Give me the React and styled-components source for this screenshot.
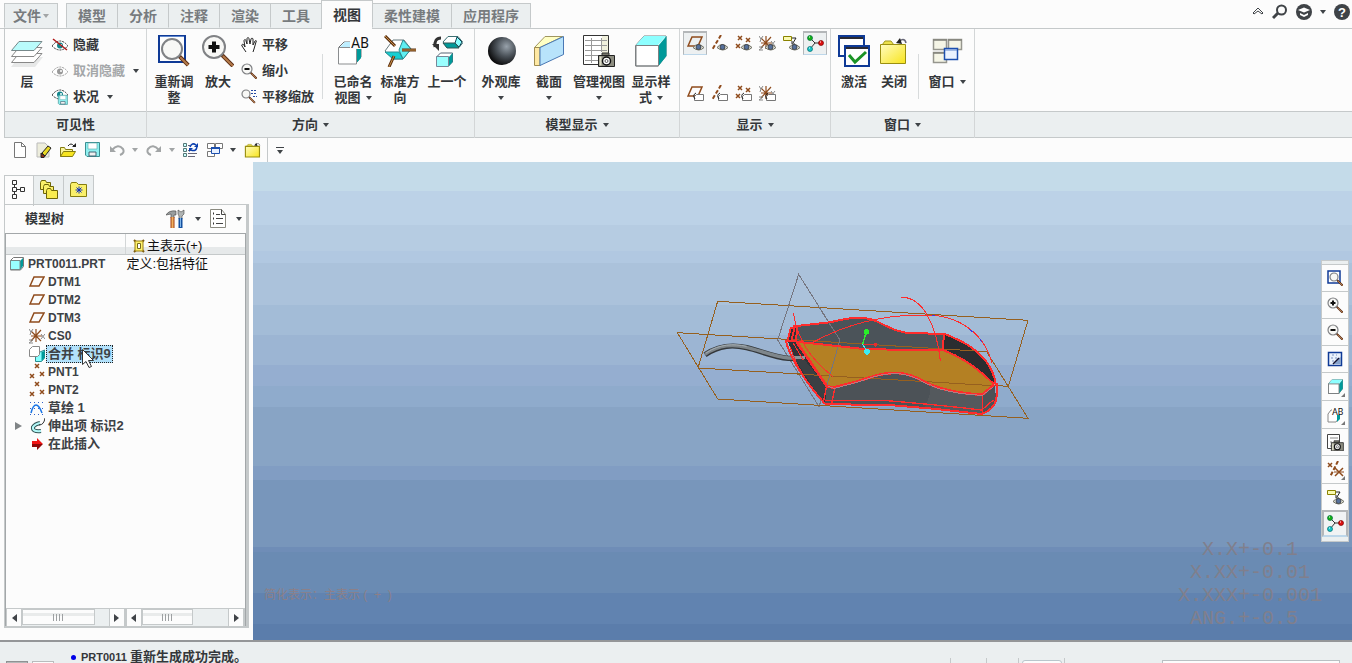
import { useState } from "react";
import styled, { createGlobalStyle } from "styled-components";

const BROWN = "#8f4b1c";
const INK = "#3f4347";

/* ---------- icons ---------- */

const Svg = ({ w = 16, h = w, children, ...rest }) => (
  <svg width={w} height={h} viewBox={`0 0 ${w} ${h}`} fill="none" aria-hidden="true" {...rest}>
    {children}
  </svg>
);

const Lens = ({ cx, cy, r, len, sign, handle = 2 }) => {
  const k = r * 0.72;
  const thin = r < 8;
  return (
    <g>
      <path d={`M${cx + k} ${cy + k}l${len} ${len}`} stroke="#5a2c14" strokeWidth={handle + (thin ? 0 : 1)} />
      <path d={`M${cx + k + 1} ${cy + k + 1}l${len - 1} ${len - 1}`} stroke="#b47a4a" strokeWidth={handle - 1} />
      <circle cx={cx} cy={cy} r={r} fill="#f8f8f6" stroke="#808285" strokeWidth={thin ? 1.2 : 2} />
      {sign && <path d={`M${cx - r * 0.5} ${cy}h${r}`} stroke="#111" strokeWidth={thin ? 2 : 4} />}
      {sign === "+" && <path d={`M${cx} ${cy - r * 0.5}v${r}`} stroke="#111" strokeWidth={thin ? 2 : 4} />}
    </g>
  );
};

const LayersIcon = () => (
  <Svg w={32}>
    <path d="M8 22h24l-8 10H0z" fill="#d9dadb" opacity=".6" />
    <path d="M8 18.500h23l-8 9H.5z" fill="#fff" stroke="#888" />
    <path d="M8 12.500h23l-8 9H.5z" fill="#fff" stroke="#888" />
    <path d="M8 6.500h23l-8 9H.5z" fill="#b9fbfb" stroke="#77898b" />
  </Svg>
);
const RefitIcon = () => (
  <Svg w={32}>
    <path d="M1 1h26v26H1z" fill="#fdfdfd" stroke="#0f3a96" strokeWidth="2" />
    <path d="M2 1.500h24" stroke="#5f86cc" />
    <Lens cx={14} cy={14} r={10} len={9} handle={3} />
  </Svg>
);
const ZoomInIcon = () => (
  <Svg w={32}>
    <Lens cx={12} cy={12} r={11} len={11} handle={3} sign="+" />
  </Svg>
);
const NamedViewIcon = () => (
  <Svg w={34} h={32}>
    <path d="M3 12l5-5h17v15l-5 6H3z" fill="#fff" stroke="#6d7072" />
    <path d="M4 12l5-5h10l-5 5z" fill="#bdeeff" />
    <path d="M20.500 13l4.500-4v14l-4.500 5z" fill="#009a9a" />
    <path d="M2.500 12.500h18V29h-18z" fill="#fff" stroke="#8a8d8f" />
    <path d="M14 2h20v12H14z" fill="#fcfcfc" />
    <text x="15" y="13" fontSize="14" fontWeight="400" fill="#111" fontFamily="Roboto, sans-serif">AB</text>
  </Svg>
);
const StdIcon = () => (
  <Svg w={32}>
    <path d="M9 5h11l7 9-8 10H9L1 16z" fill="#fff" stroke="#66797c" />
    <path d="M19 5l8 9-8 10-4-9z" fill="#5eeff2" stroke="#2a8c90" />
    <path d="M1 17h14l4 7H9z" fill="#16cfd2" stroke="#2a8c90" />
    <path d="M1 1l10 10M18 15h14M10 21L5 32" stroke="#5c3010" strokeWidth="3" />
    <path d="M1 1l10 10M18 15h14M10 21L5 32" stroke="#c89048" />
  </Svg>
);
const PreviousIcon = () => (
  <Svg w={32}>
    <path d="M12 7l5-5.500h10l5 6-4 5H16z" fill="#fff" stroke="#3c6f72" />
    <path d="M26 2l5 5-3 5-4-4z" fill="#8ff" stroke="#145" />
    <path d="M12 8h12l4 5H16z" fill="#009a9a" stroke="#355" />
    <path d="M5.500 22l4-4h12v9l-4 4" fill="#fff" stroke="#567" />
    <path d="M18 22l3.500-4v9L18 31z" fill="#009a9a" />
    <path d="M5.500 21.500h12v10h-12z" fill="#9ff" stroke="#789" />
    <path d="M10 3Q3 3 4 12" stroke="#333" strokeWidth="3" />
    <path d="M1 9h7v7z" fill="#333" />
  </Svg>
);
const SphereIcon = () => (
  <Svg w={32}>
    <defs>
      <radialGradient id="ball" cx=".66" cy=".34" r=".7">
        <stop offset="0" stopColor="#98a2ab" />
        <stop offset=".5" stopColor="#4b5259" />
        <stop offset="1" stopColor="#0b0b0c" />
      </radialGradient>
    </defs>
    <circle cx="17" cy="16" r="14" fill="url(#ball)" />
  </Svg>
);
const SectionIcon = () => (
  <Svg w={32}>
    <path d="M1.500 12.500L12 1.500h18L7 12.500z" fill="#ffffc4" stroke="#a09660" />
    <path d="M1.500 12.500H7v18H1.500z" fill="#ffe9a4" stroke="#a08c50" />
    <path d="M7 12.500L30.500 1.500v18L7 30.500z" fill="#b8e3fb" stroke="#4a78b4" />
  </Svg>
);
const CameraIcon = ({ x, y, s = 1 }) => (
  <g transform={`translate(${x} ${y}) scale(${s})`}>
    <path d="M4 1h7v3H4z" fill="#77776b" stroke="#333" />
    <path d="M.5 3.500h16v11H.5z" fill="#8d8d80" stroke="#222" />
    <path d="M1.500 4.500h2v9h-2z" fill="#ddddc8" />
    <circle cx="8.500" cy="9" r="4" fill="#fff" stroke="#111" strokeWidth="1.500" />
    <circle cx="8.500" cy="9" r="1.500" stroke="#555" />
  </g>
);
const ManageIcon = () => (
  <Svg w={32}>
    <path d="M.5.5h25v29H.5z" fill="#fff" stroke="#333" />
    <path d="M19 1h6v20h-6z" fill="#f0f0dc" />
    <path d="M2 5.500h22M2 10.500h22M2 15.500h22M2 20.500h14M2 25.500h14M8.500 3v25M18.500 3v14" stroke="#999" />
    <CameraIcon x={15} y={17} />
  </Svg>
);
const CubeIcon = ({ size = 32 }) => {
  const small = size < 20;
  return (
    <svg width={size} height={size} viewBox="0 0 32 32" fill="none" aria-hidden="true" strokeWidth={small ? 2 : 1}>
      <path d="M.5 10.500L9 1h22v20l-8 10H.5z" fill="#fff" stroke="#7c8082" />
      <path d="M1 10L9 1h22l-8 9z" fill="#8dffff" />
      <path d="M23.500 10.500L31.500 1v20l-8 10z" fill="#009a9a" />
      <path d="M1 10.500h22.500V31H1z" stroke="#7c8082" />
    </svg>
  );
};
const ActivateIcon = () => (
  <Svg w={32}>
    <path d="M1 1h25v20H1z" fill="#fff" stroke="#0f3a96" strokeWidth="2" />
    <path d="M2 2h23v2H2z" fill="#2a2a33" />
    <path d="M7 11h24v20H7z" fill="#fff" stroke="#0f3a96" strokeWidth="2" />
    <path d="M8 12h22v2H8z" fill="#2a2a33" />
    <path d="M11 20l6 7 11-10" stroke="#1b9426" strokeWidth="3" />
  </Svg>
);
const CloseFolder = ({ size = 32 }) => (
  <svg width={size} height={size} viewBox="0 0 32 32" fill="none" aria-hidden="true">
    <defs>
      <linearGradient id="folder" x1="0" y1="0" x2="1" y2="1">
        <stop offset="0" stopColor="#fffcc0" />
        <stop offset="1" stopColor="#f8e41c" />
      </linearGradient>
    </defs>
    <path d="M4 10l3-4h6l3 4z" fill="#ece14a" stroke="#a09820" />
    <path d="M2.500 9.500h25v19h-25z" fill="url(#folder)" stroke="#9a8f10" strokeWidth={size < 20 ? 2 : 1} />
    <path d="M28 8c-1-5-5-4-7-1" stroke="#667" strokeWidth="1.500" />
    <path d="M18 8l4-5 2 6z" fill="#222" />
  </svg>
);
const WindowsIcon = () => (
  <Svg w={32}>
    <path d="M2.500 4.500h13v10h-13zM17.500 4.500h13v10h-13zM2.500 17.500h13v10h-13z" fill="#f5f5e6" stroke="#96968e" strokeWidth="1.500" />
    <path d="M2 5h14M17 5h14M2 18h14" stroke="#84847c" strokeWidth="1.500" />
    <path d="M13.500 13.500h13v11h-13z" fill="#eaf2ff" stroke="#1c4fae" strokeWidth="1.500" />
    <path d="M14 15h12" stroke="#5c84cc" />
  </Svg>
);

const Eye = ({ x = 0, y = 0, color = "#333", pupil = "#12868c" }) => (
  <g transform={`translate(${x} ${y})`}>
    <path d="M0 5Q4 0 8 0t8 5Q12 9 8 9T0 5z" fill="#fff" stroke={color} strokeDasharray="2 1" />
    <circle cx="8" cy="4.500" r="3" fill={pupil} />
    <circle cx="9" cy="4" r="1" fill="#fff" />
  </g>
);
const HideIcon = () => (
  <Svg>
    <Eye y={4} />
    <path d="M1 2l14 11" stroke="#b01818" strokeWidth="1.500" />
  </Svg>
);
const UnhideIcon = () => (
  <Svg>
    <Eye y={4} color="#999" pupil="#999" />
  </Svg>
);
const Disk = ({ x = 0, y = 0, s = 1 }) => (
  <g transform={`translate(${x} ${y}) scale(${s})`}>
    <path d="M.5.5h14v14H2l-1.500-1.500z" fill="#8ff0f0" stroke="#3c8f92" />
    <path d="M3 1h9v6H3z" fill="#fff" stroke="#5aa" strokeWidth=".6" />
    <path d="M4 10h7v4H4z" fill="#f0f0f0" stroke="#467" />
  </g>
);
const StatusIcon = () => (
  <Svg>
    <Eye y={1} />
    <Disk x={6} y={6} s={0.65} />
  </Svg>
);
const HandIcon = () => (
  <Svg>
    <path
      d="M5 15l-4-6c-1-2 1-2 2-1l1 2-1-6c0-2 2-2 2 0l1 3V2c0-2 2-2 2 0l1 5 1-5c0-1 2-1 2 0v6l2-4c1-1 2 0 1 1l-2 7-1 3"
      fill="#fff" stroke="#222" />
  </Svg>
);
const ZoomOutIcon = () => (
  <Svg>
    <Lens cx={6} cy={6} r={5} len={6} sign="-" />
  </Svg>
);
const SmallZoomIn = () => (
  <Svg>
    <Lens cx={6} cy={6} r={5} len={6} sign="+" />
  </Svg>
);
const PanZoomIcon = () => (
  <Svg>
    <Lens cx={5} cy={5} r={4} len={6} />
    <path d="M10 1.500h6M10 4.500h6M12 7.500h4" stroke="#2448a0" strokeDasharray="2 1" />
  </Svg>
);
const SmallRefit = () => (
  <Svg>
    <path d="M1 1h12v12H1z" fill="#fff" stroke="#0f3a96" strokeWidth="1.500" />
    <Lens cx={7} cy={7} r={4} len={6} />
  </Svg>
);

const Cross = ({ x, y, r = 2, color = BROWN }) => (
  <path d={`M${x - r} ${y - r}l${2 * r} ${2 * r}M${x + r} ${y - r}l${-2 * r} ${2 * r}`} stroke={color} strokeWidth="1.500" />
);
const datumShapes = {
  plane: <path d="M5 2h10l-4 9H1z" stroke={BROWN} strokeWidth="1.500" />,
  axis: <path d="M10 0L1 15" stroke={BROWN} strokeWidth="2" strokeDasharray="4 2" />,
  points: (
    <>
      <Cross x={5} y={3} />
      <Cross x={13} y={5} />
      <Cross x={3} y={11} />
    </>
  ),
  csys: (
    <>
      <path d="M7 1v13M2 8h11M2 3l10 10M12 2L2 13" stroke={BROWN} strokeWidth="1.200" />
      <path d="M0 1l2 3 2-3M2 4l-1 3M12 6l4 5M16 6l-4 5M0 12h4l-4 3h4" stroke="#888" />
    </>
  ),
  note: (
    <>
      <path d="M.5 1.500h8v4h-8z" fill="#fafab0" stroke="#8a8200" />
      <path d="M9 3h4l-3 5M12 9H9V6" stroke="#222" />
    </>
  ),
};
const DatumIcon = ({ kind, mark }) => (
  <Svg w={17}>
    {datumShapes[kind]}
    {mark === "eye" && (
      <>
        <path d="M6 12.500q5-6 11 0-5 5-11 0z" fill="#dedfd4" stroke="#6d6d62" />
        <circle cx="11.500" cy="12" r="2.500" fill="#56709a" stroke="#333" strokeWidth=".7" />
      </>
    )}
    {mark === "tag" && (
      <>
        <path d="M9.500 9.500h7v6h-9v-4z" fill="#fff" stroke="#777" />
        <path d="M8 14q-3-4 1-6" stroke="#222" />
      </>
    )}
  </Svg>
);
const SpinIcon = () => (
  <Svg w={17}>
    <path d="M3 3l5 5h6M8 8l-5 6" stroke="#333" />
    <circle cx="3" cy="3" r="2.500" fill="#14b414" stroke="#064" strokeWidth=".7" />
    <circle cx="14" cy="8" r="2.500" fill="#e01010" stroke="#700" strokeWidth=".7" />
    <circle cx="3" cy="14" r="2.500" fill="#16c8cc" stroke="#066" strokeWidth=".7" />
    <path d="M2 2h1M13 7h1M2 13h1" stroke="#fff" />
  </Svg>
);
const PlaneIcon = () => (
  <Svg>
    <path d="M5 3h10l-5 9H1z" stroke={BROWN} strokeWidth="1.500" />
  </Svg>
);

const NewIcon = () => (
  <Svg>
    <path d="M2.500.5h7l4 4v11h-11z" fill="#fff" stroke="#777" />
    <path d="M9.500.5v4h4" stroke="#777" />
  </Svg>
);
const EditIcon = () => (
  <Svg>
    <path d="M1 1h8l4 4v10H1z" fill="#ededdc" stroke="#bbb" />
    <path d="M6 11l6-7 3 2-6 8z" fill="#e8d824" stroke="#222" />
    <path d="M5 11l4 3-1 1.500H5z" fill="#8c3018" stroke="#222" />
  </Svg>
);
const OpenIcon = () => (
  <Svg w={17} h={16}>
    <path d="M.5 14.500v-9h4l1 2h7v3" fill="#fbf59a" stroke="#857c10" />
    <path d="M.5 14.500l3-5h12l-3 5z" fill="#f7e420" stroke="#857c10" />
    <path d="M8 4q3-4 6 0" stroke="#222" />
    <path d="M12 5h4V1z" fill="#222" />
  </Svg>
);
const SaveIcon = () => (
  <Svg>
    <Disk />
  </Svg>
);
const UndoIcon = ({ flip }) => (
  <Svg>
    <g transform={flip ? "translate(16 0) scale(-1 1)" : undefined}>
      <path d="M3 8q6-7 11-1 2 4-3 6" stroke="#a2a5a6" strokeWidth="2" />
      <path d="M1 4v6h6z" fill="#a2a5a6" />
    </g>
  </Svg>
);
const RegenIcon = () => (
  <Svg>
    <path d="M.5 1.500h3v3h-3zM.5 6.500h3v3h-3zM.5 11.500h3v3h-3z" fill="#cff" stroke="#577" />
    <path d="M5 3.500h2M5 8.500h3M5 11.500h9M5 14.500h7" stroke="#667" />
    <path d="M7 5q2-5 6-2M14 5q-1 5-6 3" stroke="#0b3fae" strokeWidth="1.500" />
    <path d="M15 1v4h-4zM6 10V6h4z" fill="#0b3fae" />
  </Svg>
);
const SmallWindows = () => (
  <Svg>
    <path d="M.5 1.500h7v5h-7zM8.500 1.500h7v5h-7zM.5 9.500h7v5h-7z" fill="#fff" stroke="#777" />
    <path d="M4.500 5.500h8v6h-8z" fill="#e8f1ff" stroke="#1c4fae" />
    <path d="M4 6h9" stroke="#1c4fae" strokeWidth="2" />
  </Svg>
);
const TreeIcon = () => (
  <Svg w={14} h={20}>
    <path d="M.5.5h4v4h-4zM.5 7.500h4v4h-4zM.5 14.500h4v4h-4zM8.500 7.500h4v4h-4z" stroke="#333" />
    <path d="M2.500 5v2M2.500 12v2M5 9.500h3" stroke="#333" />
  </Svg>
);
const FoldersIcon = () => (
  <Svg w={18} h={20}>
    <path d="M.5 9.500v-7l1-2h4l1 2h4v7z" fill="#faf06a" stroke="#6e6608" />
    <path d="M3.500 13.500v-7l1-2h4l1 2h4v7z" fill="#faf06a" stroke="#6e6608" />
    <path d="M6.500 18.500v-8l1-2h3l1 2h6v8z" fill="#f9ec50" stroke="#6e6608" />
  </Svg>
);
const FavIcon = () => (
  <Svg w={18}>
    <path d="M.5 15.500v-12l1-2h5l2 2h8v12z" fill="#faf06a" stroke="#857c10" />
    <path d="M9 5.500v7M5.500 9h7M6.500 6.500l5 5M11.500 6.500l-5 5" stroke="#1030c0" />
  </Svg>
);
const ToolsIcon = () => (
  <Svg w={20}>
    <path d="M0 6q3-5 10-4v4H8v3H5V5z" fill="#9a9e9f" stroke="#444" strokeWidth=".6" />
    <path d="M6.500 8v11" stroke="#a03c10" strokeWidth="4" />
    <path d="M6.500 8v11" stroke="#f0b060" strokeWidth="2" />
    <path d="M12 5V1l3 2 3-2v4l-2 2v3h-3V7z" fill="#b0b4b4" stroke="#444" strokeWidth=".6" />
    <path d="M14.500 9v10" stroke="#1450a0" strokeWidth="4" />
    <path d="M14.500 9v9" stroke="#7fb4e8" />
  </Svg>
);
const ListIcon = () => (
  <Svg w={17} h={20}>
    <path d="M.5.5h11l4 5v13H.5z" fill="#fff" stroke="#8a8a80" />
    <path d="M11.500.5v5h4" stroke="#444" />
    <path d="M6 5.500h4M6 9.500h7M6 14.500h7" stroke="#444" />
    <path d="M3 4.500h1M3 9.500h1M3 14.500h1" stroke="#333" strokeWidth="2" />
  </Svg>
);
const RepIcon = () => (
  <Svg w={12} h={14}>
    <path d="M1 1l2 2M11 1L9 3M1 13l2-2M11 13l-2-2" stroke="#7a5a14" strokeWidth="2" />
    <path d="M2 2h8v10H2z" fill="#fff36c" stroke="#9a7c10" />
    <path d="M4.500 4.500h3v5h-3z" fill="#fff" stroke="#776a20" />
  </Svg>
);
const SmallPart = () => (
  <Svg w={14}>
    <path d="M.5 3.500l3-3h10v9l-3 3.500H.5z" fill="#fff" stroke="#777" />
    <path d="M10 4l3-3v8l-3 4z" fill="#009a9a" />
    <path d="M.5 3.500h9.500v9H.5z" fill="#9ff" stroke="#788" />
  </Svg>
);
const MergeIcon = () => (
  <Svg>
    <path d="M6.500 8l9-4v8l-3 3.500h-6z" fill="#8ff" stroke="#2c8c8f" />
    <path d="M12.500 6l3-1v7l-3 3z" fill="#009a9a" />
    <path d="M.5 3.500l3-3h7v8l-2 2h-8z" fill="#fff" stroke="#888" />
  </Svg>
);
const PntIcon = () => (
  <Svg h={18}>
    <Cross x={8} y={3} />
    <Cross x={3} y={13} />
    <Cross x={13} y={11} />
  </Svg>
);
const SketchIcon = () => (
  <Svg>
    <path d="M1 2.500h14M1 8.500h14M1 14.500h14" stroke="#3262c8" strokeDasharray="1 3" />
    <path d="M2 13Q4 5 7 5q3 0 6 8" stroke="#1673e6" strokeWidth="1.500" />
  </Svg>
);
const SweepIcon = () => (
  <Svg>
    <path d="M12 13Q3 14 4 9q2-3 7-4" stroke="#355" strokeWidth="4" />
    <path d="M12 13Q3 14 4 9q2-3 7-4" stroke="#b4f8f8" strokeWidth="2" />
    <path d="M10 7q5 0 6-7" stroke="#333" />
  </Svg>
);
const InsertIcon = () => (
  <Svg>
    <path d="M3 5h5V2l6 6H3z" fill="#f01414" />
    <path d="M3 8h11l-6 6v-3H3z" fill="#8e0808" />
  </Svg>
);
const RepaintIcon = () => (
  <Svg>
    <path d="M1.500 1.500h13v13h-13z" fill="#eaf2fc" stroke="#0f3a96" strokeWidth="1.500" />
    <path d="M5 4h2M9 4h1M4 7h2M8 7h2M5 10h2" stroke="#7d94c0" />
    <path d="M12 7l-5 6h7V6z" fill="#86a2cc" />
    <path d="M12 7l-6 6" stroke="#113" strokeWidth="1.500" />
  </Svg>
);
const SmallNamed = () => (
  <Svg w={17} h={16}>
    <path d="M1 7l3-4h8v8l-3 4H1z" fill="#fff" stroke="#888" />
    <path d="M10 8l3-1v5l-3 3z" fill="#009a9a" />
    <path d="M5 0h12v8H5z" fill="#fcfcfc" />
    <text x="5" y="8" fontSize="9" fontWeight="400" fill="#111" fontFamily="Roboto, sans-serif">AB</text>
  </Svg>
);
const SmallManage = () => (
  <Svg w={17}>
    <path d="M.5.5h12v14H.5z" fill="#fff" stroke="#444" />
    <path d="M3 4h8M3 8h2M3 12h2" stroke="#888" />
    <CameraIcon x={4} y={6} s={0.75} />
  </Svg>
);
const DatumFilterIcon = () => (
  <Svg w={17}>
    <Cross x={3} y={4} />
    <path d="M11 0L3 16" stroke={BROWN} strokeWidth="2" strokeDasharray="4 2" />
    <Cross x={12} y={11} r={4} />
    <path d="M7 11h10" stroke={BROWN} />
  </Svg>
);
const SearchIcon = () => (
  <Svg>
    <circle cx="9.500" cy="6" r="4.500" stroke={INK} strokeWidth="2" />
    <path d="M6 9l-5 5" stroke={INK} strokeWidth="3" />
  </Svg>
);
const LearnIcon = () => (
  <Svg>
    <circle cx="8" cy="8" r="8" fill={INK} />
    <path d="M2 6l6-2.500L14 6 8 8.500z" fill="#fff" />
    <path d="M4 9l4 2 4-2v2l-4 2-4-2z" fill="#fff" />
  </Svg>
);
const HelpIcon = () => (
  <Svg>
    <circle cx="8" cy="8" r="8" fill={INK} />
    <text x="8" y="13" fontSize="13" fontWeight="700" textAnchor="middle" fill="#fff" fontFamily="Liberation Sans, sans-serif">?</text>
  </Svg>
);
const CollapseIcon = () => (
  <Svg w={12} h={10}>
    <path d="M1 6l5-5 5 5-1 1-4-3-4 3z" fill="#fff" stroke={INK} />
  </Svg>
);
const CursorIcon = styled(({ className }) => (
  <svg className={className} width="13" height="20" viewBox="0 0 13 20" aria-hidden="true">
    <path d="M.5.5v15l3.500-3 3 6 2.500-1-3-6h5z" fill="#fff" stroke="#333" />
  </svg>
))`
  position: absolute;
  left: 35px;
  top: 3px;
  z-index: 1;
  pointer-events: none;
`;

/* ---------- styles ---------- */

const GlobalStyle = createGlobalStyle`
  * { box-sizing: border-box; }
  body {
    margin: 0;
    background: #fcfcfc;
    color: #34373a;
    font: 700 13px/16px "Liberation Sans", "Noto Sans CJK SC", sans-serif;
  }
  button {
    font: inherit;
    color: inherit;
    background: none;
    border: 0;
    padding: 0;
  }
  svg { display: block; flex: none; }
`;

const Page = styled.div`
  height: 100vh;
  overflow: hidden;
  display: flex;
  flex-direction: column;
`;

const Caret = styled.span`
  display: inline-block;
  flex: none;
  border: 3px solid transparent;
  border-top: 4px solid ${(p) => (p.$dim ? "#a2a5a6" : INK)};
  border-bottom: 0;
`;

const TabBar = styled.header`
  display: flex;
  align-items: flex-end;
  height: 29px;
  padding: 0 2px 0 4px;
  border-bottom: 1px solid #c5c9ca;
  flex: none;
`;
const Tab = styled.button`
  height: ${(p) => (p.$active ? 29 : 25)}px;
  margin-bottom: ${(p) => (p.$active ? -1 : 0)}px;
  padding: 0 11px;
  font-size: 14px;
  color: ${(p) => (p.$active ? "#34373a" : "#777b7e")};
  background: ${(p) => (p.$active ? "#fcfcfc" : "#ebeff0")};
  border: 1px solid #c5c9ca;
  border-bottom: ${(p) => (p.$active ? 0 : "1px solid #ebeff0")};
  margin-left: -1px;
`;
const FileTab = styled(Tab)`
  display: flex;
  align-items: center;
  gap: 2px;
  padding: 0 8px;
  margin: 0 9px 0 0;
`;
const HeaderTools = styled.div`
  display: flex;
  align-items: center;
  gap: 8px;
  margin: 0 0 8px auto;
`;

const Ribbon = styled.section`
  display: flex;
  flex: none;
  height: 109px;
  margin-left: 4px;
  border-left: 1px solid #c5c9ca;
`;
const GroupBox = styled.div`
  display: flex;
  flex-direction: column;
  flex: ${(p) => (p.$width ? `0 0 ${p.$width}px` : 1)};
  border-right: ${(p) => (p.$width ? "1px solid #d3d6d7" : 0)};
`;
const GroupBody = styled.div`
  flex: 1;
  display: flex;
  padding: 0 ${(p) => p.$pad || 0}px;
`;
const GroupTitle = styled.div`
  display: flex;
  align-items: center;
  justify-content: center;
  gap: 5px;
  height: 27px;
  background: #ebeff0;
  border: solid #c5c9ca;
  border-width: 1px 0;
`;
const BigButtonBox = styled.button`
  display: flex;
  flex-direction: column;
  align-items: center;
  gap: 7px;
  width: ${(p) => p.$width}px;
  padding-top: 6px;
  white-space: nowrap;
`;
const BigLabel = styled.span`
  display: flex;
  flex-direction: column;
  align-items: center;
`;
const LabelLine = styled.span`
  display: flex;
  align-items: center;
  gap: 5px;
  min-height: 16px;
`;
const SmallStack = styled.div`
  display: flex;
  flex-direction: column;
  gap: 9px;
  padding-top: 7px;
  margin-left: ${(p) => p.$left || 0}px;
`;
const SmallButton = styled.button`
  display: flex;
  align-items: center;
  gap: 5px;
  height: 17px;
  white-space: nowrap;
  color: ${(p) => (p.disabled ? "#a4a7a9" : "inherit")};
`;
const ArrowSlot = styled(Caret)`
  margin-left: 3px;
`;
const Divider = styled.i`
  width: 1px;
  height: 45px;
  margin: 25px ${(p) => p.$gap || 0}px 0;
  background: #d8dbdc;
  flex: none;
`;
const ToggleGrid = styled.div`
  display: grid;
  grid-template-columns: repeat(6, 24px);
  grid-template-rows: 24px 24px;
  row-gap: 26px;
  padding-top: 2px;
`;
const Toggle = styled.button`
  display: flex;
  align-items: center;
  justify-content: center;
  background: ${(p) => (p["aria-pressed"] ? "#edf0f1" : "none")};
  border: ${(p) => (p["aria-pressed"] ? "1px solid #b4b7b9" : "1px solid transparent")};
  border-top-width: 2px;
  border-bottom-color: ${(p) => (p["aria-pressed"] ? "#bdd7ea" : "transparent")};
`;

const QuickBar = styled.nav`
  display: flex;
  align-items: center;
  height: 24px;
  padding-left: 12px;
  gap: 8px;
  flex: none;
`;
const QuickButton = styled.button`
  display: flex;
  align-items: center;
  gap: 7px;
`;
const QuickDivider = styled.i`
  width: 1px;
  height: 24px;
  margin: 0 0 0 -3px;
  background: #c5c9ca;
`;
const MoreCaret = styled.button`
  border-top: 1px solid ${INK};
  padding: 2px 1px 0;
  display: flex;
`;

const Workspace = styled.main`
  display: flex;
  flex: 0 0 calc(100vh - 185px);
`;
const Side = styled.aside`
  width: 253px;
  flex: none;
  display: flex;
  flex-direction: column;
  padding: 13px 4px 12px;
`;
const SideTabs = styled.div`
  display: flex;
  height: 29px;
  flex: none;
`;
const SideTab = styled.button`
  display: flex;
  align-items: center;
  justify-content: center;
  width: 30px;
  height: ${(p) => (p.$active ? 31 : 30)}px;
  padding-bottom: ${(p) => (p.$active ? 2 : 0)}px;
  background: ${(p) => (p.$active ? "#fcfcfc" : "#ebeff0")};
  border: 1px solid #c5c9ca;
  border-left-width: ${(p) => (p.$active ? 1 : 0)}px;
  border-bottom: ${(p) => (p.$active ? 0 : "1px solid #c5c9ca")};
`;
const Panel = styled.div`
  flex: 1;
  display: flex;
  flex-direction: column;
  min-height: 0;
  border: 1px solid #c5c9ca;
  border-width: 1px 3px 2px 1px;
`;
const PanelHead = styled.div`
  display: flex;
  align-items: center;
  gap: 9px;
  height: 28px;
  padding: 0 4px 0 20px;
`;
const PanelTitle = styled.h2`
  margin: 0 auto 0 0;
  font-size: 13px;
`;
const TreeBox = styled.div`
  flex: 1;
  display: flex;
  flex-direction: column;
  min-height: 0;
  border: 1px solid #a3a7a9;
  border-bottom: 0;
`;
const TreeTable = styled.table`
  width: 100%;
  table-layout: fixed;
  border-collapse: collapse;
  color: #3d4145;
  th, td {
    padding: 0;
    height: 18px;
    text-align: left;
    white-space: nowrap;
  }
  th {
    height: 20px;
    background: linear-gradient(#fcfcfc 65%, #e6e9ea 65%);
    border-bottom: 1px solid #c5c9ca;
    font-weight: 400;
    color: #111;
  }
  th + th { border-left: 1px solid #d3d6d7; padding-left: 7px; }
  td + td { padding-left: 1px; font-weight: 400; color: #111; }
`;
const HeadCell = styled.span`
  display: flex;
  align-items: center;
  gap: 2px;
  height: 20px;
  padding-top: 4px;
`;
const Node = styled.div`
  position: relative;
  display: flex;
  align-items: center;
  gap: 2px;
  height: 18px;
  padding-left: ${(p) => (p.$root ? 4 : 23)}px;
`;
const NodeName = styled.span`
  position: relative;
  line-height: 16px;
  font-size: ${(p) => (p.$cjk ? 13 : 12)}px;
  padding: 0 1px;
  margin-left: ${(p) => (p.$root ? 0 : -1)}px;
  background: ${(p) => (p.$selected ? "#b2e1fb" : "none")};
  border: 1px ${(p) => (p.$selected ? "dotted #222" : "solid transparent")};
`;
const Expander = styled.button`
  position: absolute;
  left: 9px;
  top: 5px;
  border: 4px solid transparent;
  border-left: 7px solid #808486;
  border-right: 0;
`;
const ScrollRow = styled.div`
  display: flex;
  height: 18px;
  margin-top: auto;
  background: #ebeff0;
  border-top: 1px solid #c5c9ca;
`;
const ScrollBar = styled.div`
  display: flex;
  width: ${(p) => p.$width};
  border-right: 1px solid #c5c9ca;
`;
const ScrollStep = styled.button`
  width: 16px;
  display: flex;
  align-items: center;
  justify-content: center;
  background: #fcfcfc;
  border: solid #c5c9ca;
  border-width: 0 1px;
`;
const StepArrow = styled.span`
  border: 4px solid transparent;
  border-${(p) => (p.$dir === "left" ? "right" : "left")}: 5px solid ${INK};
  border-${(p) => p.$dir}: 0;
`;
const Track = styled.div`
  flex: 1;
`;
const Thumb = styled.div`
  width: ${(p) => p.$size}%;
  height: 16px;
  border: 1px solid #c5c9ca;
  background: linear-gradient(#fcfcfc 20%, #e9ebeb 20% 45%, #fcfcfc 45%);
  display: flex;
  align-items: center;
  justify-content: center;
  gap: 2px;
  i { width: 1px; height: 7px; background: #9da0a2; }
`;

const bands = [
  [29, "#c4dbe9"], [63, "#bcd2e7"], [89, "#b6cce2"], [101, "#b1c8e1"], [143, "#abc2db"],
  [173, "#a3bcd7"], [203, "#9cb5d3"], [224, "#95aed0"], [245, "#8fabcc"], [304, "#88a4c5"],
  [318, "#819dc3"], [385, "#7896bb"], [390, "#6f8db7"], [431, "#6a8bb3"], [462, "#6183b0"],
  [478, "#5b7dab"],
];
const sky = bands
  .map(([end, color], i) => {
    const from = i ? bands[i - 1][0] : 0;
    return `${color} ${((from / 478) * 100).toFixed(2)}% ${((end / 478) * 100).toFixed(2)}%`;
  })
  .join(", ");

const Viewport = styled.section`
  position: relative;
  flex: 1;
  min-width: 0;
  overflow: hidden;
  background: linear-gradient(${sky});
`;
const Model = styled.svg`
  position: absolute;
  left: 407px;
  top: 98px;
`;
const RepNote = styled.div`
  position: absolute;
  left: 11px;
  bottom: 37px;
  font-size: 12px;
  font-weight: 400;
  color: #8c8088;
  white-space: pre;
`;
const Tolerance = styled.pre`
  position: absolute;
  right: 30px;
  bottom: 10px;
  margin: 0;
  font: 400 20px/23px "Liberation Mono", monospace;
  color: #807f8c;
`;
const FloatBar = styled.div`
  position: absolute;
  right: 3px;
  top: 98px;
  width: 28px;
  padding: 3px 0 4px;
  background: #ebeff0;
  border: 1px solid #c5c9ca;
`;
const FloatButton = styled.button`
  position: relative;
  display: flex;
  align-items: center;
  justify-content: center;
  width: 100%;
  height: ${(p) => (p.$menu ? 28 : 27)}px;
  background: #fcfcfc;
  border-top: 1px solid #c5c9ca;
  ${(p) => p["aria-pressed"] && "border: 2px solid #b4b7b9; border-bottom-color: #bdd7ea; background: #f1f3f4;"}
  &::after {
    content: "";
    display: ${(p) => (p.$menu ? "block" : "none")};
    position: absolute;
    right: 3px;
    bottom: 3px;
    border: 2px solid transparent;
    border-right-color: #777;
    border-bottom-color: #777;
  }
`;

const StatusBar = styled.footer`
  display: flex;
  align-items: flex-start;
  flex: 0 0 44px;
  background: #ebeff0;
  border-top: 2px solid #949698;
`;
const StatusButton = styled.button`
  width: 22px;
  height: 20px;
  margin: 19px 0 0 ${(p) => p.$left}px;
  background: ${(p) => (p.$dark ? "#b4b7b8" : "#fcfcfc")};
  border: 1px solid ${(p) => (p.$dark ? "#8f9293" : "#b9bcbd")};
`;
const Message = styled.p`
  display: flex;
  align-items: center;
  gap: 3px;
  margin: 7px auto 0 17px;
  b { font-size: 11px; }
  i { width: 5px; height: 5px; margin-right: 2px; border-radius: 3px; background: #0000e8; }
`;
const StatusSlot = styled.div`
  width: ${(p) => p.$width}px;
  height: 24px;
  margin-top: 16px;
  border-left: 1px solid #c5c9ca;
  padding: 2px 0 0 3px;
`;
const SlotButton = styled.button`
  width: 40px;
  height: 20px;
  background: #fcfcfc;
  border: 1px solid #b9c6cc;
  border-radius: 3px;
`;
const Filter = styled.select`
  width: 178px;
  height: 22px;
  margin: 18px 12px 0 0;
  background: #fcfcfc;
  border: 1px solid #b9c0c3;
`;

/* ---------- pieces ---------- */

function Group({ title, menu, width, pad, children }) {
  return (
    <GroupBox $width={width}>
      <GroupBody $pad={pad}>{children}</GroupBody>
      <GroupTitle>
        {title}
        {menu && <Caret />}
      </GroupTitle>
    </GroupBox>
  );
}

function BigButton({ icon, lines, width, menu }) {
  return (
    <BigButtonBox $width={width}>
      {icon}
      <BigLabel>
        {lines.map((line, i) => (
          <LabelLine key={i}>
            {line}
            {menu && i === lines.length - 1 && <Caret />}
          </LabelLine>
        ))}
      </BigLabel>
    </BigButtonBox>
  );
}

const tabs = ["模型", "分析", "注释", "渲染", "工具", "视图", "柔性建模", "应用程序"];

const toggles = [
  { id: "plane", kind: "plane", mark: "eye", label: "平面显示" },
  { id: "axis", kind: "axis", mark: "eye", label: "轴显示" },
  { id: "points", kind: "points", mark: "eye", label: "点显示" },
  { id: "csys", kind: "csys", mark: "eye", label: "坐标系显示" },
  { id: "note", kind: "note", mark: "eye", label: "注释显示" },
  { id: "spin", label: "旋转中心" },
  { id: "planeTag", kind: "plane", mark: "tag", label: "平面标记" },
  { id: "axisTag", kind: "axis", mark: "tag", label: "轴标记" },
  { id: "pointsTag", kind: "points", mark: "tag", label: "点标记" },
  { id: "csysTag", kind: "csys", mark: "tag", label: "坐标系标记" },
];

const nodes = [
  { name: "PRT0011.PRT", icon: <SmallPart />, root: true, note: "定义:包括特征" },
  { name: "DTM1", icon: <PlaneIcon /> },
  { name: "DTM2", icon: <PlaneIcon /> },
  { name: "DTM3", icon: <PlaneIcon /> },
  { name: "CS0", icon: <Svg>{datumShapes.csys}</Svg> },
  { name: "合并 标识9", icon: <MergeIcon />, cjk: true },
  { name: "PNT1", icon: <PntIcon /> },
  { name: "PNT2", icon: <PntIcon /> },
  { name: "草绘 1", icon: <SketchIcon />, cjk: true },
  { name: "伸出项 标识2", icon: <SweepIcon />, cjk: true, open: false },
  { name: "在此插入", icon: <InsertIcon />, cjk: true },
];

const floatTools = [
  { label: "重新调整", icon: <SmallRefit /> },
  { label: "放大", icon: <SmallZoomIn /> },
  { label: "缩小", icon: <ZoomOutIcon /> },
  { label: "重画", icon: <RepaintIcon /> },
  { label: "显示样式", icon: <CubeIcon size={15} />, menu: true },
  { label: "已命名视图", icon: <SmallNamed />, menu: true },
  { label: "视图管理器", icon: <SmallManage /> },
  { label: "基准显示过滤器", icon: <DatumFilterIcon />, menu: true },
  { label: "注释显示", icon: <DatumIcon kind="note" mark="eye" /> },
  { label: "旋转中心", icon: <SpinIcon />, pressed: true },
];

function Tree() {
  const [selected, setSelected] = useState("合并 标识9");
  return (
    <TreeTable>
      <colgroup>
        <col width="50%" />
        <col width="50%" />
      </colgroup>
      <thead>
        <tr>
          <th aria-label="名称" />
          <th>
            <HeadCell>
              <RepIcon />
              主表示(+)
            </HeadCell>
          </th>
        </tr>
      </thead>
      <tbody>
        {nodes.map((node) => (
          <tr key={node.name} onClick={() => setSelected(node.name)}>
            <td>
              <Node $root={node.root}>
                {node.open === false && <Expander aria-label="展开" />}
                {node.icon}
                <NodeName $cjk={node.cjk} $root={node.root} $selected={selected === node.name}>
                  {node.name}
                  {selected === node.name && <CursorIcon />}
                </NodeName>
              </Node>
            </td>
            <td>{node.note}</td>
          </tr>
        ))}
      </tbody>
    </TreeTable>
  );
}

function Scroll({ width, size }) {
  return (
    <ScrollBar $width={width}>
      <ScrollStep aria-label="向左"><StepArrow $dir="left" /></ScrollStep>
      <Track>
        <Thumb $size={size}><i /><i /><i /><i /></Thumb>
      </Track>
      <ScrollStep aria-label="向右"><StepArrow $dir="right" /></ScrollStep>
    </ScrollBar>
  );
}

function MouseModel() {
  return (
    <Model width="390" height="170" viewBox="0 0 1170 510" fill="none" shapeRendering="crispEdges" strokeWidth="3">
      <g stroke="#75757f">
        <path d="M416 43L353 240 477 440 540 240z" />
      </g>
      <g stroke="#96601f">
        <path d="M173 124L1104 181 1045 379 114 324z" />
        <path d="M52 218L980 275 1104 475 173 417z" />
      </g>
      {/* cable */}
      <g shapeRendering="auto">
        <path d="M135 284C180 254 220 254 260 263S340 291 385 295L435 295" stroke="#34383b" strokeWidth="16" />
        <path d="M135 283C180 253 220 253 260 262S340 290 385 294L435 294" stroke="#7e868b" strokeWidth="10" />
        <path d="M138 279C180 251 220 251 260 259" stroke="#a4adb2" strokeWidth="3" />
      </g>
      {/* shell */}
      <path d="M383 240L392 205 410 197 420 250 500 378 495 432C430 360 395 290 383 240z" fill="#303337" />
      <path d="M408 198L510 187C570 172 610 168 645 182C690 202 700 213 750 220L852 221 848 270 640 268 410 246z" fill="#4b5359" />
      <path d="M855 221C925 250 950 270 975 300Q1008 340 1003 374Q930 300 848 270z" fill="#2b2d30" />
      <path d="M415 248L620 268 848 270Q930 300 1003 374L967 404C880 400 830 385 790 364C740 335 700 334 650 346L580 368 518 383 500 378z" fill="#b48023" />
      <path d="M500 378L518 383 580 368 650 346C700 334 740 335 790 364C830 385 880 400 967 404L1003 374Q1020 450 965 462L830 447 700 436 495 432z" fill="#4c5257" />
      <path d="M500 378L486 425 400 290 430 296z" fill="#3b3f43" />
      <path d="M812 376Q812 410 795 440L965 460V407Q880 404 812 376z" fill="#54595d" />
      <path d="M395 292H435" stroke="#8c9499" strokeWidth="8" />
      <g stroke="#96601f">
        <path d="M400 239L980 275M410 342L1000 377" />
      </g>
      <path d="M416 43L353 240M476 140L540 240 500 378" stroke="#75757f" />
      <g stroke="#ff2c2c">
        <path d="M400 199L510 187C570 172 610 168 645 182C690 202 700 213 750 220L852 221C925 250 950 270 975 300Q1003 335 1007 374" strokeWidth="6" />
        <path d="M410 245L620 268 848 270Q930 300 1003 374" strokeWidth="6" />
        <path d="M852 221L848 270" strokeWidth="6" />
        <path d="M383 240L392 205 410 199M378 245C390 290 430 360 495 432M395 240L404 200M408 240L412 200" strokeWidth="6" />
        <path d="M376 242H412" strokeWidth="6" />
        <path d="M410 246L500 378 518 383 580 368 650 346C700 334 740 335 790 364C830 385 880 400 967 404L1003 374" strokeWidth="8" />
        <path d="M500 378L490 428M524 386L515 432M967 404V462M495 422H680Q830 434 965 450L1000 420" strokeWidth="4" />
        <path d="M495 432L700 436 830 447 965 462Q1012 445 1010 400V370" strokeWidth="6" />
        <path d="M390 260Q420 350 490 425M400 250L430 300" />
        <path d="M400 160C415 240 445 290 518 349" />
        <path d="M457 248C580 180 700 160 820 166C920 175 980 240 996 310" />
        <path d="M724 112C790 110 830 200 841 302" />
      </g>
      <path d="M505 380L524 385 580 370 650 348C700 336 740 337 790 366C830 387 880 402 967 406L1000 380" stroke="#97a0ab" strokeWidth="2" />
      <path d="M815 166h10M928 208l10 8M960 238l6 8" stroke="#4038e8" />
      {/* spin centre */}
      <path d="M608 253L618 218" stroke="#32e832" strokeWidth="4" />
      <path d="M608 253H646" stroke="#e82c2c" strokeWidth="3" />
      <path d="M608 253L620 272" stroke="#3cecf4" strokeWidth="3" />
      <circle cx="619" cy="216" r="8" fill="#28f028" />
      <circle cx="646" cy="254" r="6" fill="#e82c2c" />
      <circle cx="621" cy="275" r="9" fill="#3cecf4" />
    </Model>
  );
}

export default function App() {
  const [activeTab, setActiveTab] = useState("视图");
  const [pressed, setPressed] = useState({ plane: true, spin: true });

  const flip = (id) => setPressed((old) => ({ ...old, [id]: !old[id] }));

  return (
    <Page>
      <GlobalStyle />
      <TabBar>
        <FileTab>
          文件
          <Caret $dim />
        </FileTab>
        {tabs.map((tab) => (
          <Tab key={tab} $active={tab === activeTab} onClick={() => setActiveTab(tab)}>
            {tab}
          </Tab>
        ))}
        <HeaderTools>
          <button aria-label="折叠"><CollapseIcon /></button>
          <button aria-label="搜索"><SearchIcon /></button>
          <button aria-label="学习"><LearnIcon /></button>
          <Caret />
          <button aria-label="帮助"><HelpIcon /></button>
        </HeaderTools>
      </TabBar>

      <Ribbon>
        <Group title="可见性" width={142}>
          <BigButton icon={<LayersIcon />} lines={["层"]} width={44} />
          <SmallStack $left={3}>
            <SmallButton><HideIcon />隐藏</SmallButton>
            <SmallButton disabled><UnhideIcon />取消隐藏<ArrowSlot /></SmallButton>
            <SmallButton><StatusIcon />状况<ArrowSlot /></SmallButton>
          </SmallStack>
        </Group>
        <Group title="方向" menu width={327} pad={5}>
          <BigButton icon={<RefitIcon />} lines={["重新调", "整"]} width={44} />
          <BigButton icon={<ZoomInIcon />} lines={["放大"]} width={44} />
          <SmallStack $left={1}>
            <SmallButton><HandIcon />平移</SmallButton>
            <SmallButton><ZoomOutIcon />缩小</SmallButton>
            <SmallButton><PanZoomIcon />平移缩放</SmallButton>
          </SmallStack>
          <Divider $gap={8} />
          <BigButton icon={<NamedViewIcon />} lines={["已命名", "视图"]} width={44} menu />
          <BigButton icon={<StdIcon />} lines={["标准方", "向"]} width={50} />
          <BigButton icon={<PreviousIcon />} lines={["上一个"]} width={44} />
        </Group>
        <Group title="模型显示" menu width={205} pad={2}>
          <BigButton icon={<SphereIcon />} lines={["外观库", ""]} width={48} menu />
          <BigButton icon={<SectionIcon />} lines={["截面", ""]} width={48} menu />
          <BigButton icon={<ManageIcon />} lines={["管理视图", ""]} width={52} menu />
          <BigButton icon={<CubeIcon />} lines={["显示样", "式"]} width={52} menu />
        </Group>
        <Group title="显示" menu width={151} pad={3}>
          <ToggleGrid>
            {toggles.map((t) => (
              <Toggle key={t.id} aria-label={t.label} aria-pressed={!!pressed[t.id]} onClick={() => flip(t.id)}>
                {t.kind ? <DatumIcon kind={t.kind} mark={t.mark} /> : <SpinIcon />}
              </Toggle>
            ))}
          </ToggleGrid>
        </Group>
        <Group title="窗口" menu width={144} pad={3}>
          <BigButton icon={<ActivateIcon />} lines={["激活"]} width={40} />
          <BigButton icon={<CloseFolder />} lines={["关闭"]} width={40} />
          <Divider $gap={4} />
          <BigButton icon={<WindowsIcon />} lines={["窗口"]} width={48} menu />
        </Group>
        <Group />
      </Ribbon>

      <QuickBar>
        <QuickButton aria-label="新建"><NewIcon /></QuickButton>
        <QuickButton aria-label="编辑"><EditIcon /></QuickButton>
        <QuickButton aria-label="打开"><OpenIcon /></QuickButton>
        <QuickButton aria-label="保存"><SaveIcon /></QuickButton>
        <QuickButton aria-label="撤销"><UndoIcon /><Caret $dim /></QuickButton>
        <QuickButton aria-label="重做"><UndoIcon flip /><Caret $dim /></QuickButton>
        <QuickButton aria-label="重新生成"><RegenIcon /></QuickButton>
        <QuickButton aria-label="窗口"><SmallWindows /><Caret /></QuickButton>
        <QuickButton aria-label="关闭"><CloseFolder size={18} /></QuickButton>
        <QuickDivider />
        <MoreCaret aria-label="自定义"><Caret /></MoreCaret>
      </QuickBar>

      <Workspace>
        <Side>
          <SideTabs>
            <SideTab $active aria-label="模型树"><TreeIcon /></SideTab>
            <SideTab aria-label="文件夹浏览器"><FoldersIcon /></SideTab>
            <SideTab aria-label="收藏夹"><FavIcon /></SideTab>
          </SideTabs>
          <Panel>
            <PanelHead>
              <PanelTitle>模型树</PanelTitle>
              <button aria-label="设置"><ToolsIcon /></button>
              <Caret />
              <button aria-label="显示"><ListIcon /></button>
              <Caret />
            </PanelHead>
            <TreeBox>
              <Tree />
              <ScrollRow>
                <Scroll width="50%" size={84} />
                <Scroll width="50%" size={60} />
              </ScrollRow>
            </TreeBox>
          </Panel>
        </Side>
        <Viewport>
          <MouseModel />
          <RepNote>简化表示：主表示 (  +  )</RepNote>
          <Tolerance>{"  X.X+-0.1\n X.XX+-0.01\nX.XXX+-0.001\n ANG.+-0.5"}</Tolerance>
          <FloatBar>
            {floatTools.map((t) => (
              <FloatButton key={t.label} aria-label={t.label} $menu={t.menu} aria-pressed={t.pressed}>
                {t.icon}
              </FloatButton>
            ))}
          </FloatBar>
        </Viewport>
      </Workspace>

      <StatusBar>
        <StatusButton $left={6} $dark aria-label="导航器" />
        <StatusButton $left={4} aria-label="浏览器" />
        <Message>
          <i />
          <b>PRT0011</b>
          重新生成成功完成。
        </Message>
        <StatusSlot $width={36} />
        <StatusSlot $width={32} />
        <StatusSlot $width={46}>
          <SlotButton aria-label="查找" />
        </StatusSlot>
        <StatusSlot $width={98} />
        <Filter aria-label="选择过滤器" />
      </StatusBar>
    </Page>
  );
}
